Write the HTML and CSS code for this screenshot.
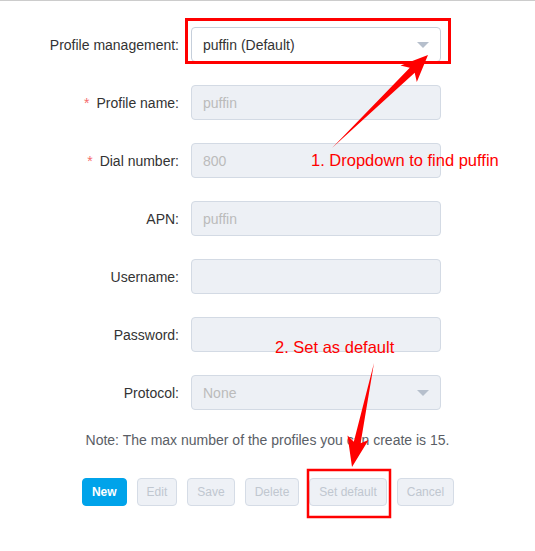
FILE: index.html
```html
<!DOCTYPE html>
<html lang="en">
<head>
<meta charset="utf-8">
<title>Profile management</title>
<link rel="stylesheet" href="styles.css">
</head>
<body>
<div class="page">
  <form class="profile-form">
    <div class="row">
      <label class="label">Profile management:</label>
      <div class="field select select-active"><span class="value">puffin (Default)</span><span class="caret"></span></div>
    </div>
    <div class="row">
      <label class="label"><span class="req">*</span>Profile name:</label>
      <div class="field"><span class="placeholder">puffin</span></div>
    </div>
    <div class="row">
      <label class="label"><span class="req">*</span>Dial number:</label>
      <div class="field"><span class="placeholder">800</span></div>
    </div>
    <div class="row">
      <label class="label">APN:</label>
      <div class="field"><span class="placeholder">puffin</span></div>
    </div>
    <div class="row">
      <label class="label">Username:</label>
      <div class="field"></div>
    </div>
    <div class="row">
      <label class="label">Password:</label>
      <div class="field"></div>
    </div>
    <div class="row">
      <label class="label">Protocol:</label>
      <div class="field select"><span class="placeholder">None</span><span class="caret"></span></div>
    </div>
  </form>
  <p class="note">Note: The max number of the profiles you can create is 15.</p>
  <div class="actions">
    <button class="btn btn-primary" type="button">New</button>
    <button class="btn" type="button">Edit</button>
    <button class="btn" type="button">Save</button>
    <button class="btn" type="button">Delete</button>
    <button class="btn" type="button">Set default</button>
    <button class="btn" type="button">Cancel</button>
  </div>

  <div class="annotations">
    <svg class="marks" width="535" height="551" viewBox="0 0 535 551" xmlns="http://www.w3.org/2000/svg">
      <rect x="186.5" y="19.5" width="263" height="43" fill="none" stroke="#ff0000" stroke-width="3"/>
      <rect x="308" y="470" width="82" height="47" fill="none" stroke="#ff0000" stroke-width="2.5"/>
      <polygon fill="#ff0000" points="428,55 400.5,65.5 409.8,67.8 332,148 414.7,72.8 416.8,82"/>
      <polygon fill="#ff0000" points="352,467 347.5,435.5 353.8,441.8 374,363 360.6,443.2 368.5,440"/>
    </svg>
    <div class="callout callout-1">1. Dropdown to find puffin</div>
    <div class="callout callout-2">2. Set as default</div>
  </div>
</div>
</body>
</html>
```

FILE: styles.css
```css
* {
  box-sizing: border-box;
}

html, body {
  margin: 0;
  padding: 0;
  background: #ffffff;
}

body {
  font-family: "Liberation Sans", Arial, sans-serif;
  color: #333333;
}

.page {
  position: relative;
  width: 535px;
  height: 551px;
  border-top: 1px solid #cccccc;
  padding-top: 26px;
}

.profile-form {
  display: flex;
  flex-direction: column;
  gap: 23px;
  margin: 0;
}

.row {
  display: grid;
  grid-template-columns: 179px 250px;
  column-gap: 12px;
  align-items: center;
  height: 35px;
}

.label {
  text-align: right;
  font-size: 14px;
  color: #333333;
  white-space: nowrap;
}

.req {
  color: #f56c6c;
  margin-right: 7px;
}

.field {
  height: 35px;
  display: flex;
  align-items: center;
  justify-content: space-between;
  padding: 0 11px 0 11px;
  background: #edf0f5;
  border: 1px solid #d3dae4;
  border-radius: 4px;
  font-size: 14px;
}

.select-active {
  background: #ffffff;
  border-color: #c6cfdb;
}

.value {
  color: #333333;
}

.placeholder {
  color: #bbbbbb;
}

.caret {
  width: 0;
  height: 0;
  border-left: 6px solid transparent;
  border-right: 6px solid transparent;
  border-top: 6px solid #b6bfcc;
  margin-right: 0;
}

.note {
  margin: 20px 0 0 0;
  text-align: center;
  font-size: 14px;
  line-height: 20px;
  color: #5a5e66;
}

.actions {
  margin-top: 28px;
  display: flex;
  justify-content: center;
  gap: 10px;
  padding-left: 1px;
}

.btn {
  height: 28px;
  padding: 0 9px;
  font-family: "Liberation Sans", Arial, sans-serif;
  font-size: 12px;
  color: #c0c7d0;
  background: #eef1f6;
  border: 1px solid #d5dce6;
  border-radius: 4px;
}

.btn-primary {
  background: #00a3ea;
  border-color: #00a3ea;
  color: #ffffff;
  font-weight: bold;
}

.annotations {
  position: absolute;
  left: 0;
  top: -1px;
  width: 535px;
  height: 551px;
  pointer-events: none;
}

.marks {
  position: absolute;
  left: 0;
  top: 0;
}

.callout {
  position: absolute;
  color: #ff0000;
  font-size: 16.5px;
  line-height: 20px;
  white-space: nowrap;
}

.callout-1 {
  left: 311px;
  top: 150px;
}

.callout-2 {
  left: 275px;
  top: 337px;
}
```
